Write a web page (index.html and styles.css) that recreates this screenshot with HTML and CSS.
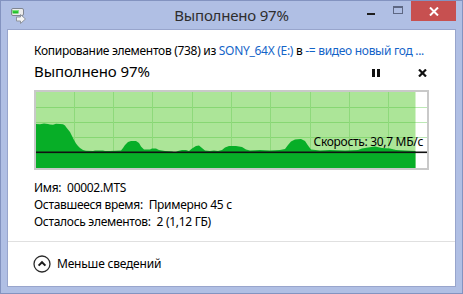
FILE: index.html
```html
<!DOCTYPE html>
<html lang="ru">
<head>
<meta charset="utf-8">
<title>Выполнено 97%</title>
<link rel="stylesheet" href="styles.css">
</head>
<body>
<div class="window">
  <div class="titlebar">
    <div class="tb-left">
      <svg class="app-icon" width="16" height="16" viewBox="0 0 16 16">
        <rect x="1.5" y="0.5" width="12" height="7" rx="1.5" fill="#ececec" stroke="#7f8590"/>
        <rect x="2.5" y="2" width="6" height="3.5" fill="#22c12a"/>
        <rect x="2.5" y="2" width="6" height="1.2" fill="#7be37c"/>
        <polygon points="6.5,9 10.5,9 10.5,6.5 15.5,11 10.5,15.5 10.5,13 6.5,13" fill="#f4f4f4" stroke="#8d939c" stroke-width="1" stroke-linejoin="round"/>
      </svg>
    </div>
    <div class="tb-title">Выполнено 97%</div>
    <div class="tb-controls">
      <div class="ctl ctl-min"><span class="min-dash"></span></div>
      <div class="ctl ctl-max"><span class="max-box"></span></div>
      <div class="ctl ctl-close">
        <svg width="10" height="9" viewBox="0 0 10 9"><path d="M1 0.5 L9 8.5 M9 0.5 L1 8.5" stroke="#fff" stroke-width="2"/></svg>
      </div>
    </div>
  </div>
  <div class="client">
    <div class="main">
      <div class="desc">Копирование элементов (738) из <span class="link">SONY_64X (E:)</span> в <span class="link">-= видео новый год ...</span></div>
      <div class="status-row">
        <div class="status">Выполнено 97%</div>
        <div class="actions">
          <svg width="8" height="8" viewBox="0 0 8 8"><rect x="0" y="0" width="3" height="8" fill="#111"/><rect x="5" y="0" width="3" height="8" fill="#111"/></svg>
          <svg width="9" height="8" viewBox="0 0 9 8"><path d="M1 0.5 L8 7.5 M8 0.5 L1 7.5" stroke="#111" stroke-width="2.2"/></svg>
        </div>
      </div>
      <div class="graph">
        <svg class="graph-svg" width="391" height="76" viewBox="0 0 391 76">
          <rect x="0" y="0" width="391" height="76" fill="#ffffff"/>
          <rect x="0" y="0" width="379.5" height="76" fill="#ace598"/>
          <g stroke="rgba(70,190,50,0.36)" stroke-width="1">
            <line x1="0" y1="15.5" x2="391" y2="15.5"/>
            <line x1="0" y1="30.5" x2="391" y2="30.5"/>
            <line x1="0" y1="45.5" x2="391" y2="45.5"/>
          </g>
          <g stroke="#8ed97b" stroke-width="1">
            <line x1="38.5" y1="0" x2="38.5" y2="76"/>
            <line x1="77.5" y1="0" x2="77.5" y2="76"/>
            <line x1="116.5" y1="0" x2="116.5" y2="76"/>
            <line x1="156.5" y1="0" x2="156.5" y2="76"/>
            <line x1="195.5" y1="0" x2="195.5" y2="76"/>
            <line x1="234.5" y1="0" x2="234.5" y2="76"/>
            <line x1="274.5" y1="0" x2="274.5" y2="76"/>
            <line x1="313.5" y1="0" x2="313.5" y2="76"/>
            <line x1="352.5" y1="0" x2="352.5" y2="76"/>
          </g>
          <g transform="translate(-1,-1)">
            <path fill="#07ae27" d="M1,77 L1,33 L5,33.3 L9,32.6 L13,33 L15,33.4 L18,33.7 L21,32.7 L25,33 L28,33.2 L30,34.5 L31,36 L33,38.5 L35,41 L37,45 L39,49 L41,52.5 L43,55 L45,57 L48,59 L51,59.8 L58,60 L60,59.5 L68,59.5 L70,60 L75,60 L86,59.5 L88,57 L90,54 L93,51 L96,50 L101,50 L104,52 L106,55.5 L109,58.5 L115,58.5 L117,57.5 L121,57.5 L124,59 L130,60 L137,60.5 L140,61.5 L143,60 L147,59 L151,59 L154,60 L157,57.5 L161,55 L164,54.5 L167,57 L170,59.5 L175,60 L179,59.5 L183,60 L187,59 L190,56.5 L194,55 L201,55 L207,56 L211,58.5 L215,59.5 L225,59 L235,59.5 L245,59 L250,58 L253,54 L256,50.5 L260,48.5 L266,48 L270,50 L273,54.5 L276,58.5 L285,59.5 L295,59 L310,59.5 L323,59 L327,57.5 L333,56.5 L340,55.5 L347,57 L355,57.5 L361,59 L370,59.5 L380.5,60 L380.5,77 Z"/>
          </g>
          <rect x="0" y="59.5" width="391" height="1.6" fill="#111"/>
        </svg>
        <div class="speed">Скорость: 30,7 МБ/с</div>
      </div>
      <div class="info">
        <div class="info-row"><span class="lbl">Имя:</span> <span class="val">00002.MTS</span></div>
        <div class="info-row"><span class="lbl">Оставшееся время:</span> <span class="val">Примерно 45 с</span></div>
        <div class="info-row"><span class="lbl">Осталось элементов:</span> <span class="val">2 (1,12 ГБ)</span></div>
      </div>
    </div>
    <div class="footer">
      <svg class="toggle-icon" width="18" height="18" viewBox="0 0 18 18">
        <circle cx="9" cy="9" r="8" fill="none" stroke="#2a2a2a" stroke-width="1.3"/>
        <polyline points="5.6,10.6 9,7.2 12.4,10.6" fill="none" stroke="#1a1a1a" stroke-width="2"/>
      </svg>
      <span class="toggle-text">Меньше сведений</span>
    </div>
  </div>
</div>
</body>
</html>
```

FILE: styles.css
```css
html, body {
  margin: 0;
  padding: 0;
}

body {
  width: 463px;
  height: 294px;
  overflow: hidden;
  font-family: "Noto Sans", "Open Sans", sans-serif;
  color: #000;
}

.window {
  box-sizing: border-box;
  width: 463px;
  height: 294px;
  background: #b0bfe4;
  border: 1px solid #8393c0;
  display: flex;
  flex-direction: column;
}

.titlebar {
  height: 28px;
  display: grid;
  grid-template-columns: 1fr auto 1fr;
  align-items: start;
}

.tb-left {
  padding-left: 9px;
  padding-top: 7px;
}

.app-icon {
  display: block;
}

.tb-title {
  font-size: 15px;
  line-height: 20px;
  padding-top: 4px;
  color: #2e2e2e;
  letter-spacing: -0.2px;
}

.tb-controls {
  display: flex;
  justify-content: flex-end;
  padding-right: 6px;
}

.ctl {
  height: 20px;
  display: flex;
  align-items: center;
  justify-content: center;
}

.ctl-min {
  width: 26px;
}

.ctl-max {
  width: 26px;
}

.ctl-close {
  width: 45px;
  background: #c75050;
}

.ctl-close svg {
  display: block;
}

.min-dash {
  display: block;
  width: 8px;
  height: 2px;
  margin-top: 6px;
  margin-right: 2px;
  background: #1e1e1e;
}

.max-box {
  display: block;
  box-sizing: border-box;
  width: 10px;
  height: 8px;
  margin-top: -2px;
  border: 1px solid #5d6783;
  border-top-width: 2px;
}

.client {
  box-sizing: border-box;
  height: 258px;
  margin: 0 6px;
  background: #fff;
  border: 1px solid #98a5cc;
  display: flex;
  flex-direction: column;
}

.main {
  padding: 13px 26px 11px 26px;
  height: 211px;
  box-sizing: border-box;
}

.desc {
  font-size: 12px;
  line-height: 16px;
  letter-spacing: -0.3px;
  white-space: nowrap;
}

.link {
  color: #1464c8;
}

.status-row {
  margin-top: 2px;
  display: flex;
  justify-content: space-between;
  align-items: flex-start;
}

.status {
  font-size: 15px;
  line-height: 20px;
  letter-spacing: -0.1px;
}

.actions {
  display: flex;
  gap: 38px;
  padding-top: 8px;
  padding-right: 2px;
}

.actions svg {
  display: block;
}

.graph {
  position: relative;
  margin-top: 9px;
  width: 391px;
  height: 76px;
  border: 2px solid #c9c9c9;
}

.graph-svg {
  display: block;
}

.speed {
  position: absolute;
  top: 42px;
  right: 4px;
  font-size: 12px;
  line-height: 16px;
  letter-spacing: -0.3px;
  white-space: nowrap;
}

.info {
  margin-top: 9px;
  font-size: 12px;
  line-height: 17px;
  letter-spacing: -0.3px;
}

.lbl {
  margin-right: 3px;
}

.footer {
  flex: 1;
  border-top: 1px solid #e0e0e0;
  display: flex;
  align-items: center;
  padding-left: 25px;
  gap: 6px;
}

.toggle-icon {
  display: block;
}

.toggle-text {
  font-size: 12px;
  line-height: 18px;
  letter-spacing: -0.2px;
}
```
